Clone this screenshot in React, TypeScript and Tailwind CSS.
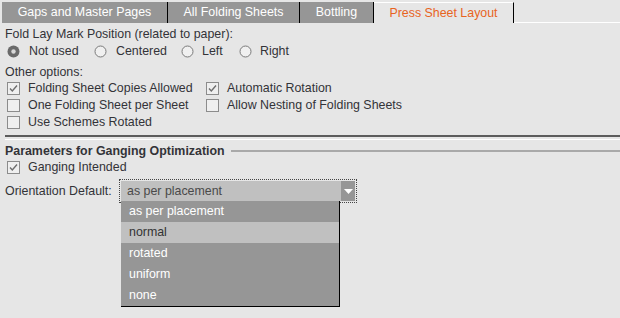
import type { ReactNode } from 'react';

const tabs = [
  { label: 'Gaps and Master Pages', width: 'w-[166px]' },
  { label: 'All Folding Sheets', width: 'w-[132px]' },
  { label: 'Bottling', width: 'w-[74px]' },
];

const options = ['as per placement', 'normal', 'rotated', 'uniform', 'none'];

function Radio({ checked }: { checked?: boolean }) {
  return (
    <svg width="13" height="13" viewBox="0 0 13 13" className="shrink-0">
      {checked ? (
        <>
          <circle cx="6.5" cy="6.5" r="6" fill="#6a6a6a" />
          <circle cx="6.5" cy="6.5" r="2.2" fill="#d8d8d8" />
        </>
      ) : (
        <circle cx="6.5" cy="6.5" r="5.5" fill="#f0f0f0" stroke="#7a7a7a" strokeWidth="1" />
      )}
    </svg>
  );
}

function Check({ checked }: { checked?: boolean }) {
  return (
    <svg width="13" height="13" viewBox="0 0 13 13" className="shrink-0">
      <rect x="0.5" y="0.5" width="12" height="12" fill="#efefef" stroke="#8c8c8c" />
      {checked && (
        <path d="M3 6.5 L5.3 9 L10 3.5" fill="none" stroke="#6e6e6e" strokeWidth="1.4" />
      )}
    </svg>
  );
}

function CheckRow({ checked, children }: { checked?: boolean; children: ReactNode }) {
  return (
    <div className="flex items-center gap-[8px] h-[17px]">
      <Check checked={checked} />
      <span className="whitespace-nowrap">{children}</span>
    </div>
  );
}

function App() {
  return (
    <div
      className="w-[620px] h-[318px] bg-[#e6e6e6] text-[#333338] text-[12.4px] overflow-hidden relative"
      style={{ fontFamily: '"Liberation Sans", Arial, sans-serif' }}
    >
      {/* tab bar */}
      <div className="flex pt-[2px] h-[23px]">
        <div className="w-[2px]" />
        {tabs.map((t) => (
          <div
            key={t.label}
            className={`${t.width} h-[21px] bg-[#969696] text-white border-r border-black flex items-center justify-center leading-none`}
          >
            {t.label}
          </div>
        ))}
        <div className="w-[140px] h-[21px] border-t border-white border-r border-r-black text-[#e8641e] flex items-center justify-center leading-none">
          Press Sheet Layout
        </div>
        <div className="flex-1 h-[21px] border-b border-white" />
      </div>

      <div className="pl-[5px]">
        <div className="h-[16px] leading-[16px] mt-[3px]">Fold Lay Mark Position (related to paper):</div>
        <div className="flex items-center h-[18px] pl-[2px]">
          <div className="w-[87px] shrink-0 flex items-center gap-[9px]">
            <Radio checked />
            <span>Not used</span>
          </div>
          <div className="w-[87px] shrink-0 flex items-center gap-[9px]">
            <Radio />
            <span>Centered</span>
          </div>
          <div className="w-[58px] shrink-0 flex items-center gap-[8px]">
            <Radio />
            <span>Left</span>
          </div>
          <div className="flex items-center gap-[8px]">
            <Radio />
            <span>Right</span>
          </div>
        </div>

        <div className="h-[16px] leading-[16px] mt-[4px]">Other options:</div>
        <div className="pl-[2px] h-[51px] overflow-hidden">
          <div className="grid grid-cols-[199px_1fr]">
            <CheckRow checked>Folding Sheet Copies Allowed</CheckRow>
            <CheckRow checked>Automatic Rotation</CheckRow>
            <CheckRow>One Folding Sheet per Sheet</CheckRow>
            <CheckRow>Allow Nesting of Folding Sheets</CheckRow>
            <CheckRow>Use Schemes Rotated</CheckRow>
          </div>
        </div>

        <div className="mt-[4px] h-[2px] bg-[#5c5c5c]" />
        <div className="mt-[2px] h-px bg-white" />

        <div className="mt-[3px] h-[16px] flex items-center">
          <span className="font-bold whitespace-nowrap">Parameters for Ganging Optimization</span>
          <div className="flex-1 ml-[6px] h-[2px] bg-[#a9a9a9]" />
        </div>
        <div className="pl-[2px]">
          <CheckRow checked>Ganging Intended</CheckRow>
        </div>

        <div className="mt-[3px] flex items-center h-[24px]">
          <span className="w-[114px]">Orientation Default:</span>
          <div className="w-[238px] h-[24px] border border-dotted border-[#444] p-px flex">
            <div className="flex-1 bg-[#c0c0c0] pl-[6px] flex items-center text-[#4a4a4a]">as per placement</div>
            <div className="w-[14px] bg-[#969696] flex items-center justify-center">
              <svg width="9" height="5" viewBox="0 0 9 5">
                <path d="M0 0 H9 L4.5 5 Z" fill="white" />
              </svg>
            </div>
          </div>
        </div>
      </div>

      {/* open dropdown list */}
      <div className="absolute left-[121px] top-[201px] w-[219px] border-r border-b border-black">
        {options.map((o) => (
          <div
            key={o}
            className={`h-[21px] pl-[8px] flex items-center ${o === 'normal' ? 'bg-[#c0c0c0] text-[#333]' : 'bg-[#969696] text-white'}`}
          >
            {o}
          </div>
        ))}
      </div>
    </div>
  );
}

export default App;
